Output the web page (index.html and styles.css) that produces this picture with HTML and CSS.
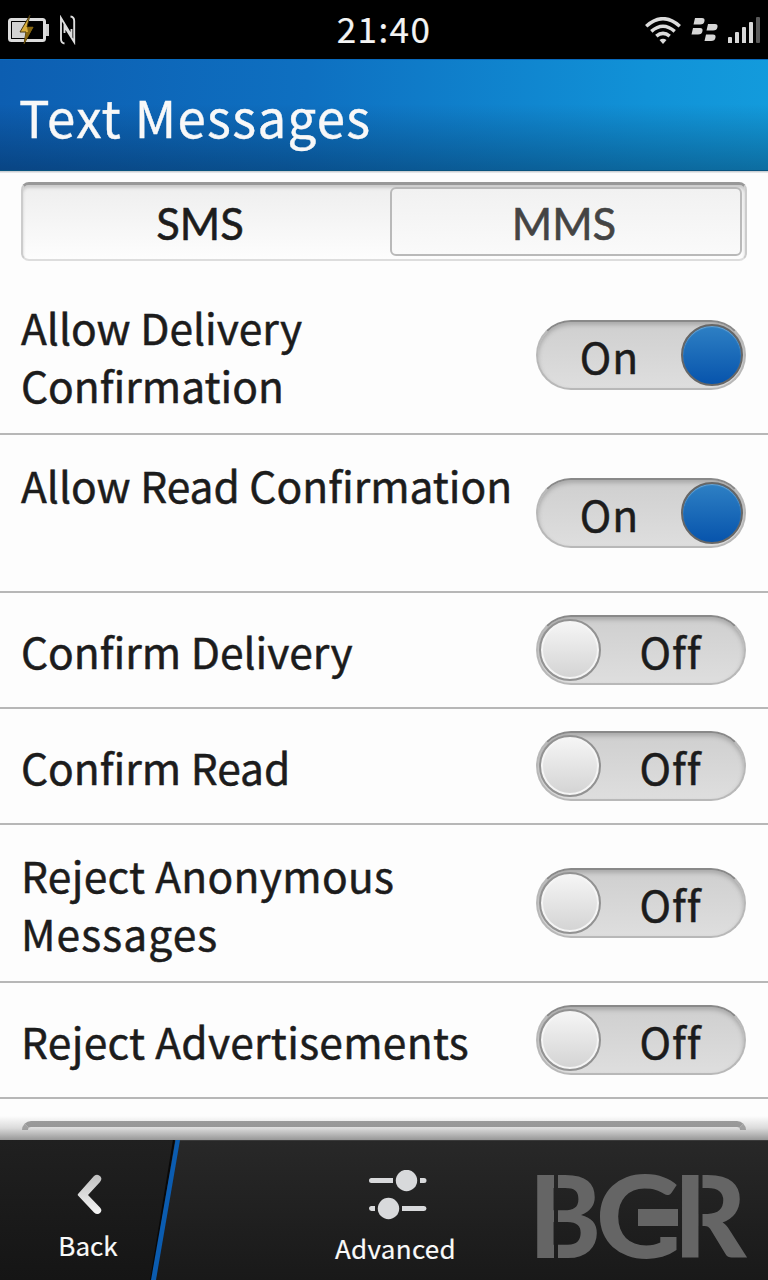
FILE: index.html
```html
<!DOCTYPE html>
<html lang="en">
<head>
<meta charset="utf-8">
<title>Text Messages</title>
<link rel="stylesheet" href="styles.css">
</head>
<body>
<div class="screen">
  <div class="status">
    <div class="status-left">
      <svg width="42" height="32" viewBox="0 0 42 32">
        <rect x="1.500" y="4.500" width="35" height="21" rx="2" fill="none" stroke="#dcdcdc" stroke-width="3"/>
        <path d="M38 9h3v12h-3z" fill="#cfcfcf"/>
        <rect x="4" y="7" width="15" height="16" fill="#d2d2d2"/>
        <path d="M22 0L12 17h6l-2 12L25 12h-6z" fill="#d9ae3c" stroke="#44350d" stroke-width="1"/>
        <path d="M19 12h6.500L16 29l2-12h2z" fill="#876610"/>
      </svg>
      <svg width="16" height="30" viewBox="0 0 16 30">
        <path d="M4.500 28.500Q1 28 1 24V3l10.500 17.500V14M10.500 1.500Q14.200 2 14.200 6V27L4.500 11.500V18" fill="none" stroke="#dedede" stroke-width="1.900"/>
      </svg>
    </div>
    <div class="clock">21:40</div>
    <div class="status-right">
      <svg width="36" height="27" viewBox="0 0 36 27" fill="none" stroke="#dcdcdc" stroke-width="3.500">
        <path d="M1.200 9.200Q18-5.800 34.800 9.200"/><path d="M6.300 14.400Q18 4.200 29.700 14.400"/><path d="M11.300 19.200Q18 13.500 24.700 19.200"/>
        <path d="M14.500 23Q18 20.500 21.500 23L18 27z" fill="#dcdcdc" stroke="none"/>
      </svg>
      <svg width="27" height="25" viewBox="0 0 27 25" fill="#d6d6d6">
        <path id="seed" d="M4 1h7q3 0 2.500 3-.5 3.500-4.500 3.500H2.500z"/>
        <use href="#seed" x="-2" y="10"/><use href="#seed" x="13" y="6"/><use href="#seed" x="11" y="16.500"/>
      </svg>
      <svg width="32" height="26" viewBox="0 0 32 26">
        <path d="M0 21q0-1 1-1h2q1 0 1 1v5H0zM7 16q0-1 1-1h2q1 0 1 1v10H7zM14 11q0-1 1-1h2q1 0 1 1v15h-4zM21 6q0-1 1-1h2q1 0 1 1v20h-4z" fill="#d8d8d8"/>
        <rect x="28" width="4" height="26" rx="1" fill="#5a5a5a"/>
      </svg>
    </div>
  </div>
  <header class="header"><h1 class="title">Text Messages</h1></header>
  <main class="content">
    <div class="segmented">
      <div class="segment">SMS</div>
      <div class="segment segment-raised">MMS</div>
    </div>
    <div class="rows">
      <div class="row row-tall"><div class="label">Allow Delivery<br>Confirmation</div><div class="toggle on"><span class="state">On</span><span class="knob"></span></div></div>
      <div class="row row-tall"><div class="label">Allow Read Confirmation</div><div class="toggle on"><span class="state">On</span><span class="knob"></span></div></div>
      <div class="row"><div class="label">Confirm Delivery</div><div class="toggle"><span class="knob"></span><span class="state">Off</span></div></div>
      <div class="row"><div class="label">Confirm Read</div><div class="toggle"><span class="knob"></span><span class="state">Off</span></div></div>
      <div class="row row-tall"><div class="label wide">Reject Anonymous<br><span class="loose">Messages</span></div><div class="toggle"><span class="knob"></span><span class="state">Off</span></div></div>
      <div class="row"><div class="label wide">Reject Advertisements</div><div class="toggle"><span class="knob"></span><span class="state">Off</span></div></div>
    </div>
    <div class="next"><div class="next-button"></div></div>
    <div class="fade"></div>
  </main>
  <footer class="footer">
    <svg class="back-panel" width="190" height="140" viewBox="0 0 190 140">
      <defs><linearGradient id="bp" x2="0" y2="1"><stop stop-color="#202020"/><stop offset="1" stop-color="#151515"/></linearGradient></defs>
      <path d="M0 0H174L151 140H0z" fill="url(#bp)"/>
      <path d="M174 0L151 140" stroke="#080808" stroke-width="2"/>
      <path d="M175.500 0h4.500L156 140h-5z" fill="#0b5cb0"/>
    </svg>
    <div class="action back">
      <svg width="26" height="42" viewBox="0 0 26 42">
        <defs><linearGradient id="cg" x2="0" y2="1"><stop stop-color="#c0c0c0"/><stop offset="1" stop-color="#f6f6f6"/></linearGradient></defs>
        <path d="M18 2Q21.500-.5 24.500 2.500 26.500 5 24 8L12 21 24 33.500Q26.500 36 24.500 38.500 21.500 41.500 18 38.500L2 21.500Q1.500 20.700 2 20z" fill="url(#cg)"/>
      </svg>
      <span class="caption">Back</span>
    </div>
    <div class="action advanced">
      <svg width="58" height="50" viewBox="0 0 58 50" fill="#d8d9db">
        <path d="M2.500 8H24v5H2.500a2.500 2.500 0 010-5zM51 8h4a2.500 2.500 0 010 5h-4zM2.500 36H6v5H2.500a2.500 2.500 0 010-5zM33 36h22a2.500 2.500 0 010 5H33z"/>
        <circle cx="37.500" cy="10.500" r="10.700"/><circle cx="19.500" cy="38.500" r="10.700"/>
      </svg>
      <span class="caption">Advanced</span>
    </div>
    <svg class="brand" width="238" height="139" viewBox="0 0 238 139">
      <mask id="cuts"><rect width="238" height="139" fill="#fff"/>
        <path d="M24 20h4v110h-4zM24 52h8v14h-8zM24 84h8v15h-8zM168.500 20h4v110h-4zM168.500 52h8v15h-8zM100 85h48v11h-48zM100 54h48v14h-48z"/></mask>
      <g mask="url(#cuts)" class="brand-text">
        <text x="-1" y="117" textLength="72" lengthAdjust="spacingAndGlyphs">B</text>
        <text x="66" y="117" textLength="86" lengthAdjust="spacingAndGlyphs">G</text>
        <text x="143.500" y="117" textLength="73" lengthAdjust="spacingAndGlyphs">R</text>
      </g>
      <path class="brand-bar" d="M108 68h40v17h-40z"/>
    </svg>
  </footer>
</div>
</body>
</html>
```
FILE: styles.css
```css
* { box-sizing: border-box; }
body { margin: 0; background: #000; font-family: "Noto Sans CJK SC", "Noto Sans", sans-serif; color: #1c1c1c; }
svg { display: block; }
.screen { width: 768px; height: 1280px; overflow: hidden; display: flex; flex-direction: column; }
.status { height: 59px; flex: none; background: #000; display: grid; grid-template-columns: 1fr auto 1fr; padding: 0 8px; color: #f4f4f4; }
.status-left { display: flex; gap: 10px; padding-top: 15px; }
.clock { font-size: 35px; line-height: 55px; letter-spacing: 1.4px; -webkit-text-stroke: .2px; }
.status-right { display: flex; justify-content: flex-end; gap: 10px; padding-top: 17px; }
.header { height: 112px; flex: none; padding-left: 19px; border-top: 1px solid #0869bc; border-bottom: 1px solid #09547f;
  background: linear-gradient(180deg, rgba(0,20,45,0) 40%, rgba(0,20,45,.34) 100%), linear-gradient(92deg, #0d5eb1 0%, #0e70c1 40%, #1192d7 84%, #139bdc 100%); }
.title { margin: 0; font-size: 51px; font-weight: 400; line-height: 113px; color: #f8f8f8; letter-spacing: 1.3px; -webkit-text-stroke: .4px; }
.content { position: relative; flex: 1; background: linear-gradient(#ccd0d4 0 1px, #fdfdfd 2px); overflow: hidden; }
.segmented { margin: 11px 21px 0; height: 79px; display: flex; padding: 2px 3px 3px 0; border: 2px solid #ccc; border-top: 3px solid #989898; border-bottom-color: #ddd; border-radius: 8px;
  background: linear-gradient(#eee, #fdfdfd); box-shadow: inset 0 3px 3px #ccc; }
.segment { flex: 1; font-family: Lato, sans-serif; font-size: 43.5px; line-height: 72px; text-align: center; padding-right: 13px; -webkit-text-stroke: .6px; }
.segment-raised { flex: none; width: 352px; line-height: 68px; padding: 0 4px 0 0; color: #444; border: 2px solid #b9b9b9; border-radius: 6px; background: linear-gradient(#f1f1f1, #fafafa); }
.rows { margin-top: 16px; }
.row { height: 116px; border-bottom: 2px solid #b7b7b7; padding: 0 22px 0 21px; display: flex; justify-content: space-between; align-items: center; }
.row-tall { height: 158px; }
.label { font-size: 42.5px; line-height: 58px; padding-top: 1px; white-space: nowrap; -webkit-text-stroke: .5px; }
.loose { letter-spacing: 1.1px; }
.wide { letter-spacing: .3px; }
.row-tall .label { min-height: 117px; }
.toggle { width: 210px; height: 70px; flex: none; display: flex; align-items: center; border-radius: 35px; padding: 0 0 0 1px; border: 2px solid #b8b8b8; border-top-color: #898989;
  background: linear-gradient(#cfcfcf, #dedede); box-shadow: inset 0 3px 4px #aaa; }
.toggle.on { padding: 0 1px 0 0; }
.state { flex: 1; text-align: center; font-size: 42.5px; line-height: 58px; letter-spacing: .9px; -webkit-text-stroke: .5px; padding: 1px 4px 0 0; }
.on .state { padding-right: 0; }
.knob { width: 62px; height: 62px; flex: none; border-radius: 50%; border: 2px solid #929292; background: linear-gradient(#f6f6f6, #d3d3d3); box-shadow: inset 0 0 0 2px #f5f5f5; }
.on .knob { border-color: #666; background: linear-gradient(#2e80c4, #0754ac); box-shadow: inset 0 1px 1px #71a8d3; }
.next { height: 31px; padding: 22px 22px 0; overflow: hidden; }
.next-button { height: 60px; border: 6px solid #a8a8a8; border-top-color: #9c9c9c; border-radius: 9px; background: #fff; }
.fade { position: absolute; left: 0; right: 0; bottom: 0; height: 24px; background: linear-gradient(rgba(140,140,140,0), rgba(140,140,140,.3) 50%, rgba(140,140,140,.9)); }
.footer { position: relative; height: 140px; flex: none; display: flex; background: linear-gradient(#282828, #191919); border-top: 1px solid #3a3a3a; color: #fafafa; }
.back-panel { position: absolute; left: 0; top: -1px; }
.action { position: relative; display: flex; flex-direction: column; align-items: center; }
.back { width: 178px; padding-top: 33px; }
.advanced { width: 440px; margin-right: -88px; padding-top: 29px; }
.caption { font-size: 26px; line-height: 32px; -webkit-text-stroke: .2px; }
.back .caption { margin: 13px 2px 0 0; }
.advanced .caption { margin: 12px 5px 0 0; letter-spacing: .3px; }
.brand { position: relative; flex: none; }
.brand-text { font-family: Lato, sans-serif; font-weight: 900; font-size: 114px; fill: #656565; }
.brand-bar { fill: #656565; }
```
